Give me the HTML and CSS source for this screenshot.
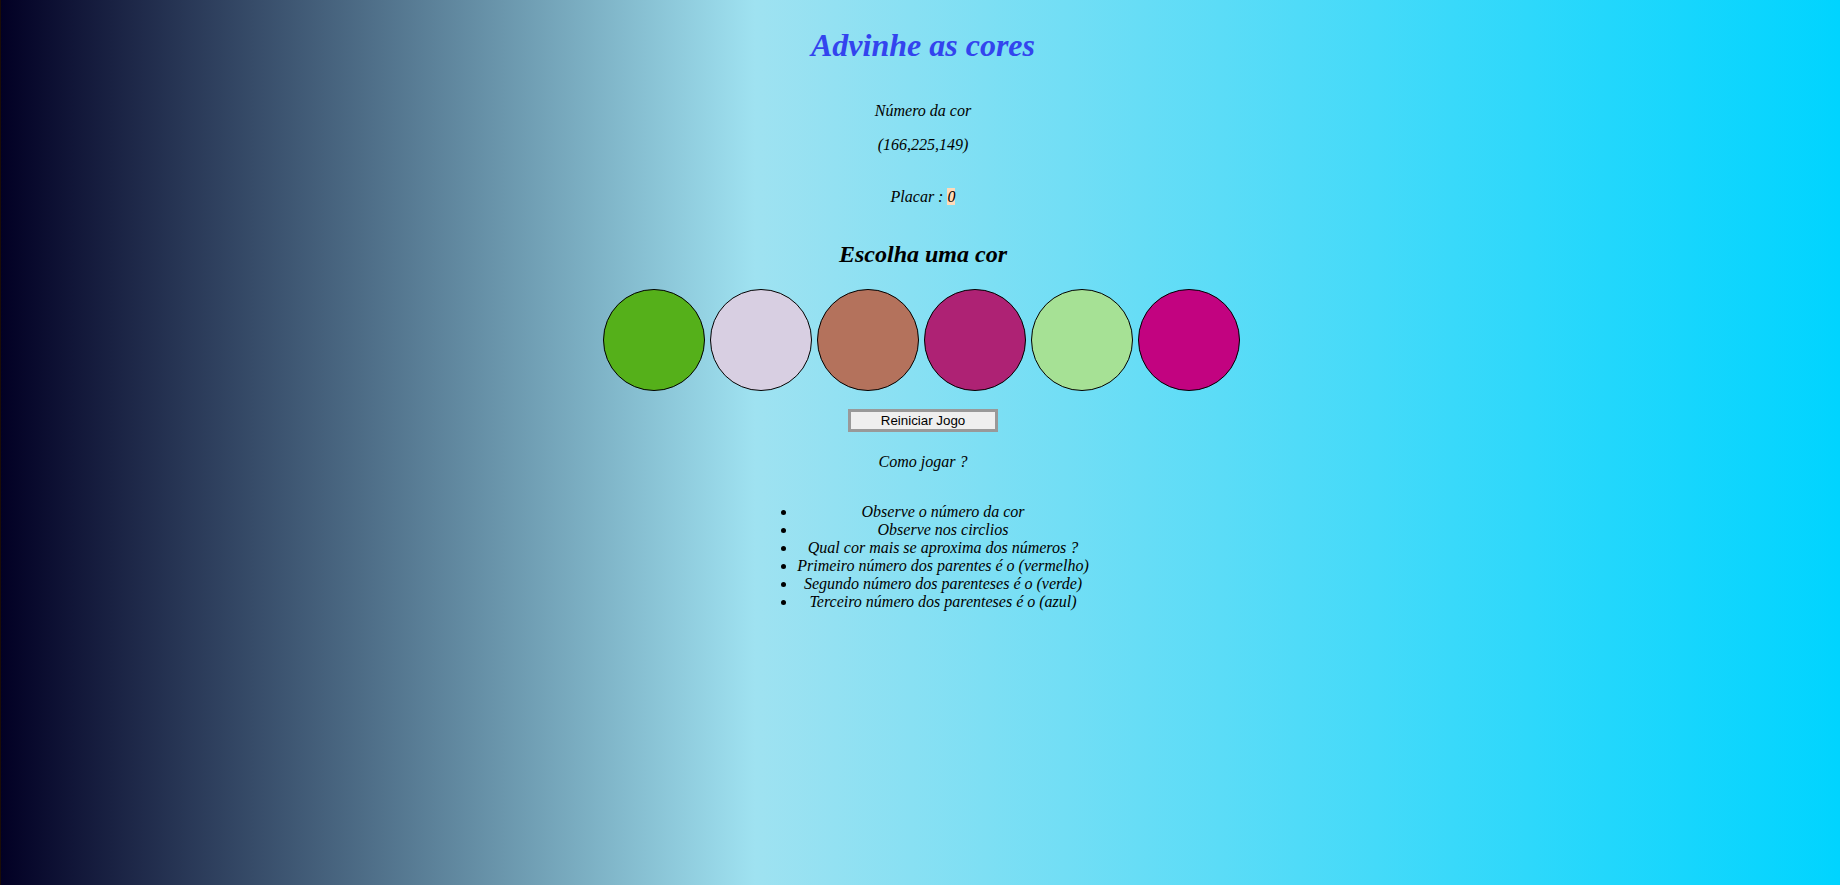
FILE: index.html
```html
<!DOCTYPE html>
<html lang="pt-BR">
<head>
<meta charset="utf-8">
<title>Advinhe as cores</title>
<link rel="stylesheet" href="styles.css">
</head>
<body>
  <main class="game">
    <h1 class="title">Advinhe as cores</h1>
    <p class="info first">Número da cor</p>
    <p class="info rgb">(166,225,149)</p>
    <p class="info score">Placar : <span class="score-value">0</span></p>
    <h2 class="subtitle">Escolha uma cor</h2>
    <div class="circles">
      <div class="ball" style="background-color: rgb(85,176,26)"></div>
      <div class="ball" style="background-color: rgb(216,207,226)"></div>
      <div class="ball" style="background-color: rgb(180,114,92)"></div>
      <div class="ball" style="background-color: rgb(174,34,116)"></div>
      <div class="ball" style="background-color: rgb(166,225,149)"></div>
      <div class="ball" style="background-color: rgb(194,3,128)"></div>
    </div>
    <button class="reset" type="button">Reiniciar Jogo</button>
    <p class="info how">Como jogar ?</p>
    <ul class="rules">
      <li>Observe o número da cor</li>
      <li>Observe nos circlios</li>
      <li>Qual cor mais se aproxima dos números ?</li>
      <li>Primeiro número dos parentes é o (vermelho)</li>
      <li>Segundo número dos parenteses é o (verde)</li>
      <li>Terceiro número dos parenteses é o (azul)</li>
    </ul>
  </main>
</body>
</html>
```
FILE: styles.css
```css
html {
  background: #ffffff;
}

body {
  margin: 0;
  height: 885px;
  border-left: 1px solid #1a0c06;
  background: linear-gradient(90deg, rgb(2, 0, 36) 0%, rgb(159, 226, 241) 41%, rgb(0, 212, 255) 100%);
  font-family: "Liberation Serif", "Times New Roman", serif;
  color: #000;
}

.game {
  display: flex;
  flex-direction: column;
  align-items: center;
  padding-left: 5px;
  text-align: center;
}

.title {
  margin: 27.2px 0 0;
  font-size: 32px;
  font-style: italic;
  font-weight: bold;
  color: #3344ee;
}

.info {
  margin: 0;
  font-size: 16px;
  font-style: italic;
}

.first {
  margin-top: 37.6px;
}

.rgb {
  margin-top: 16px;
}

.score {
  margin-top: 34px;
}

.score-value {
  background: #ffdab9;
}

.subtitle {
  margin: 35.5px 0 0;
  font-size: 24px;
  font-style: italic;
  font-weight: bold;
}

.circles {
  display: flex;
  gap: 5px;
  margin-top: 21px;
  margin-right: 3px;
}

.ball {
  width: 100px;
  height: 100px;
  border: 1px solid #000;
  border-radius: 50%;
}

.reset {
  margin-top: 18px;
  width: 150px;
  height: 23px;
  padding: 1px 6px;
  border: 3px solid #999999;
  background: #efefef;
  font-family: "Liberation Sans", Arial, sans-serif;
  font-size: 13.33px;
  color: #000;
}

.how {
  margin-top: 21px;
}

.rules {
  margin: 32px 0 0;
  padding-left: 40px;
  font-size: 16px;
  font-style: italic;
}

.rules li {
  text-align: center;
}
```
